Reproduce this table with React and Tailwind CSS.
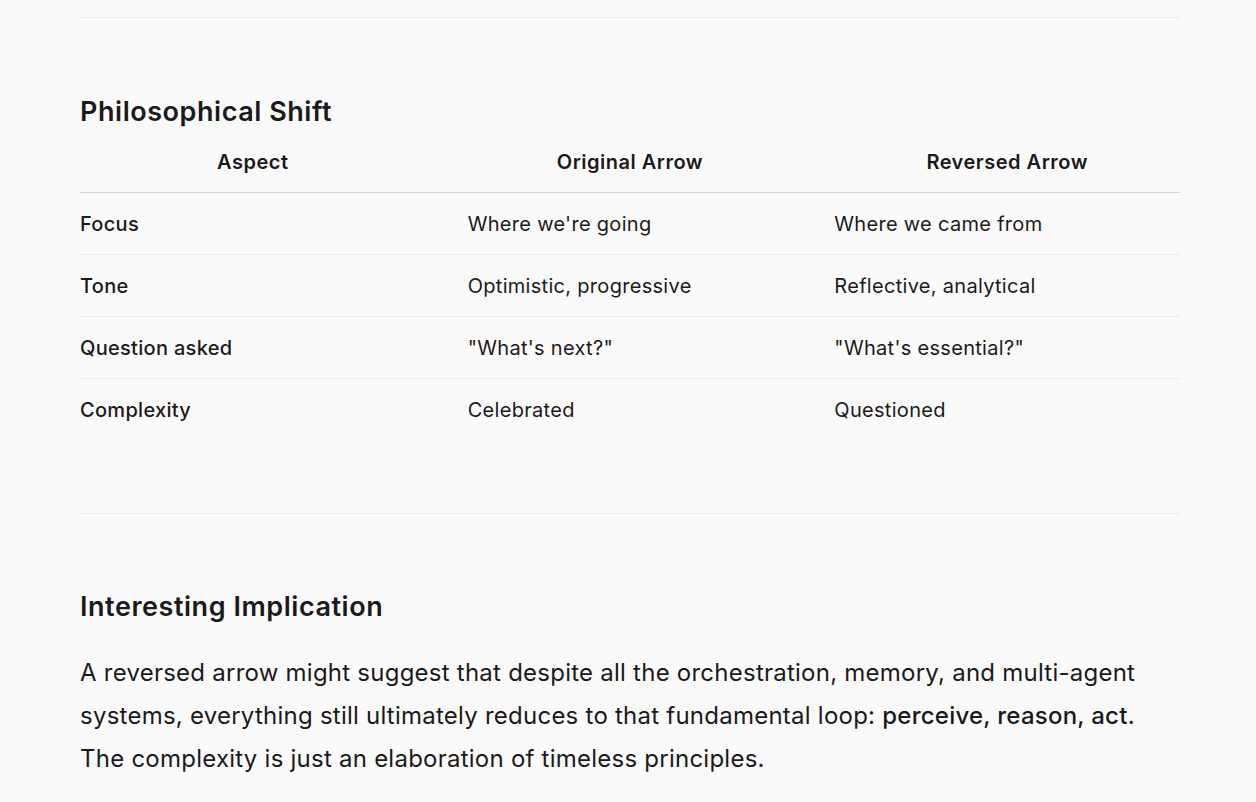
const rows = [
  ['Focus', "Where we're going", 'Where we came from'],
  ['Tone', 'Optimistic, progressive', 'Reflective, analytical'],
  ['Question asked', '"What\'s next?"', '"What\'s essential?"'],
  ['Complexity', 'Celebrated', 'Questioned'],
]

function App() {
  return (
    <div className="min-h-screen bg-[#fafafa] text-[#1a1a1a] font-['Inter',sans-serif]">
      <div className="w-[1100px] ml-[80px] pt-[17px]">
        {/* top rule */}
        <hr className="border-0 border-t border-[#ebebeb]" />

        {/* ===== PHILOSOPHICAL SHIFT ===== */}
        <h2 className="mt-[78px] mb-[12px] text-[27px] leading-[32px] font-semibold tracking-[0.02em]">
          Philosophical Shift
        </h2>
        <table className="w-full table-fixed border-collapse text-[20px] tracking-[0.015em]">
          <thead>
            <tr className="border-b border-[#d6d6d6]">
              {['Aspect', 'Original Arrow', 'Reversed Arrow'].map((h) => (
                <th
                  key={h}
                  className="px-[21px] first:pl-0 last:pr-0 pt-[8px] pb-[16px] leading-[28px] font-semibold text-center tracking-[0.025em]"
                >
                  {h}
                </th>
              ))}
            </tr>
          </thead>
          <tbody>
            {rows.map((r, i) => (
              <tr key={r[0]} className={i < rows.length - 1 ? 'border-b border-[#ececec]' : ''}>
                <td className="pl-0 pr-[21px] pt-[17px] pb-[15px] leading-[29px] font-medium">{r[0]}</td>
                <td className="px-[21px] pt-[17px] pb-[15px] leading-[29px]">{r[1]}</td>
                <td className="pl-[21px] pr-0 pt-[17px] pb-[15px] leading-[29px]">{r[2]}</td>
              </tr>
            ))}
          </tbody>
        </table>

        <hr className="mt-[73px] border-0 border-t border-[#ebebeb]" />

        {/* ===== INTERESTING IMPLICATION ===== */}
        <h2 className="mt-[77px] text-[27px] leading-[32px] font-semibold tracking-[0.02em]">
          Interesting Implication
        </h2>
        <p className="mt-[28px] text-[24px] leading-[43px] tracking-[0.01em]">
          A reversed arrow might suggest that despite all the orchestration, memory, and multi-agent
          systems, everything still ultimately reduces to that fundamental loop:{' '}
          <strong className="font-medium">perceive, reason, act</strong>. The complexity is just an
          elaboration of timeless principles.
        </p>
      </div>
    </div>
  )
}

export default App
